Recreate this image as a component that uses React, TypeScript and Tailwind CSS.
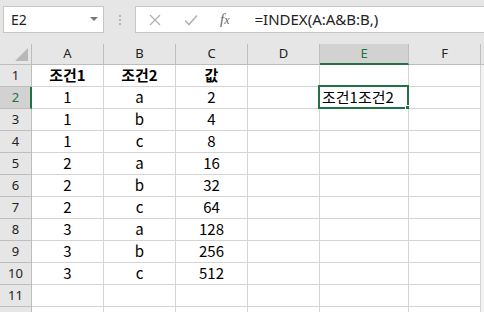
import React from "react";

const cols = [
  { key: "A", w: "w-[72px]" },
  { key: "B", w: "w-[72px]" },
  { key: "C", w: "w-[72px]" },
  { key: "D", w: "w-[72px]" },
  { key: "E", w: "w-[89px]" },
  { key: "F", w: "w-[72px]" },
];

const data: string[][] = [
  ["조건1", "조건2", "값"],
  ["1", "a", "2"],
  ["1", "b", "4"],
  ["1", "c", "8"],
  ["2", "a", "16"],
  ["2", "b", "32"],
  ["2", "c", "64"],
  ["3", "a", "128"],
  ["3", "b", "256"],
  ["3", "c", "512"],
  ["", "", ""],
  ["", "", ""],
];

const cjk = "font-['Noto_Sans_CJK_KR','Noto_Sans',sans-serif]";
const ui = "font-['Noto_Sans','Liberation_Sans',sans-serif]";

const FormulaBar = () => (
  <div className="flex h-[44px] items-start pt-[6px] pl-[3px]">
    <div className="flex h-[27px] w-[101px] items-center justify-between border border-[#c6c6c6] bg-white pl-[7px] pr-[5px]">
      <span className={`${ui} text-[14px] text-[#222]`}>E2</span>
      <svg width="8" height="5" viewBox="0 0 8 5">
        <path d="M0 0 L8 0 L4 4 Z" fill="#777" />
      </svg>
    </div>
    <div className="flex h-[27px] w-[31px] flex-col items-center justify-center gap-[2px]">
      <span className="h-[2px] w-[2px] bg-[#b5b5b5]" />
      <span className="h-[2px] w-[2px] bg-[#b5b5b5]" />
      <span className="h-[2px] w-[2px] bg-[#b5b5b5]" />
    </div>
    <div className="flex h-[27px] flex-1 items-center border-y border-l border-[#c6c6c6] bg-white">
      <svg className="ml-[13px]" width="12" height="12" viewBox="0 0 12 12">
        <path d="M1 1 L11 11 M11 1 L1 11" stroke="#b4b4b4" strokeWidth="1.4" />
      </svg>
      <svg className="ml-[23px]" width="14" height="12" viewBox="0 0 14 12">
        <path d="M1 6.5 L5 10.5 L13 1.5" stroke="#b4b4b4" strokeWidth="1.6" fill="none" />
      </svg>
      <span className="ml-[22px] font-['Liberation_Serif',serif] text-[15px] italic text-[#666]">
        f<span className="text-[12px]">x</span>
      </span>
      <span className={`ml-[25px] ${ui} text-[15px] text-[#222]`}>=INDEX(A:A&amp;B:B,)</span>
    </div>
  </div>
);

const HeaderRow = () => (
  <div className="flex h-[21px]">
    <div className="relative w-[32px] border-r border-b border-[#bdbdbd] bg-[#e6e6e6]">
      <svg className="absolute right-[3px] bottom-[3px]" width="13" height="13" viewBox="0 0 13 13">
        <path d="M13 0 L13 13 L0 13 Z" fill="#b8b8b8" />
      </svg>
    </div>
    {cols.map((c) =>
      c.key === "E" ? (
        <div
          key={c.key}
          className={`${c.w} flex items-center justify-center border-r border-[#bdbdbd] border-b-2 border-b-[#217346] bg-[#d2d2d2] ${ui} text-[13px] text-[#217346]`}
        >
          {c.key}
        </div>
      ) : (
        <div
          key={c.key}
          className={`${c.w} flex items-center justify-center border-r border-b border-[#bdbdbd] bg-[#e6e6e6] ${ui} text-[13px] text-[#222]`}
        >
          {c.key}
        </div>
      )
    )}
    <div className="flex-1 border-b border-[#bdbdbd] bg-[#e6e6e6]" />
  </div>
);

const Row = ({ n, vals }: { n: number; vals: string[] }) => {
  const selected = n === 2;
  // row 12 is cut off by the window, its number doesn't show
  const label = n < 12 ? n : "";
  return (
    <div className="flex h-[22px]">
      <div
        className={
          selected
            ? `flex w-[32px] items-center justify-center border-r-2 border-r-[#217346] border-b border-b-[#bdbdbd] bg-[#d2d2d2] pl-[1px] ${ui} text-[13px] text-[#217346]`
            : `flex w-[32px] items-center justify-center border-r border-b border-[#bdbdbd] bg-[#e6e6e6] ${ui} text-[13px] text-[#222]`
        }
      >
        {label}
      </div>
      {cols.map((c, i) => (
        <div
          key={c.key}
          className={`${c.w} relative flex items-center border-r border-b border-[#d4d4d4] bg-white ${cjk} text-[15px] text-black ${
            i < 3 ? "justify-center" : "justify-start pl-[2px]"
          } ${n === 1 ? "font-bold" : ""}`}
        >
          {i < 3 ? vals[i] : ""}
          {selected && c.key === "E" && (
            <>
              <span className="whitespace-nowrap">조건1조건2</span>
              <div className="absolute -top-[2px] -left-[2px] -right-[1px] -bottom-[1px] border-2 border-[#217346]" />
              <div className="absolute -right-[4px] -bottom-[4px] h-[7px] w-[7px] border border-white bg-[#217346]" />
            </>
          )}
        </div>
      ))}
      <div className="flex-1 bg-[#f3f3f3]" />
    </div>
  );
};

export default function App() {
  return (
    <div className="h-[312px] w-[484px] overflow-hidden bg-[#e6e6e6]">
      <FormulaBar />
      <HeaderRow />
      {data.map((vals, i) => (
        <Row key={i} n={i + 1} vals={vals} />
      ))}
    </div>
  );
}
